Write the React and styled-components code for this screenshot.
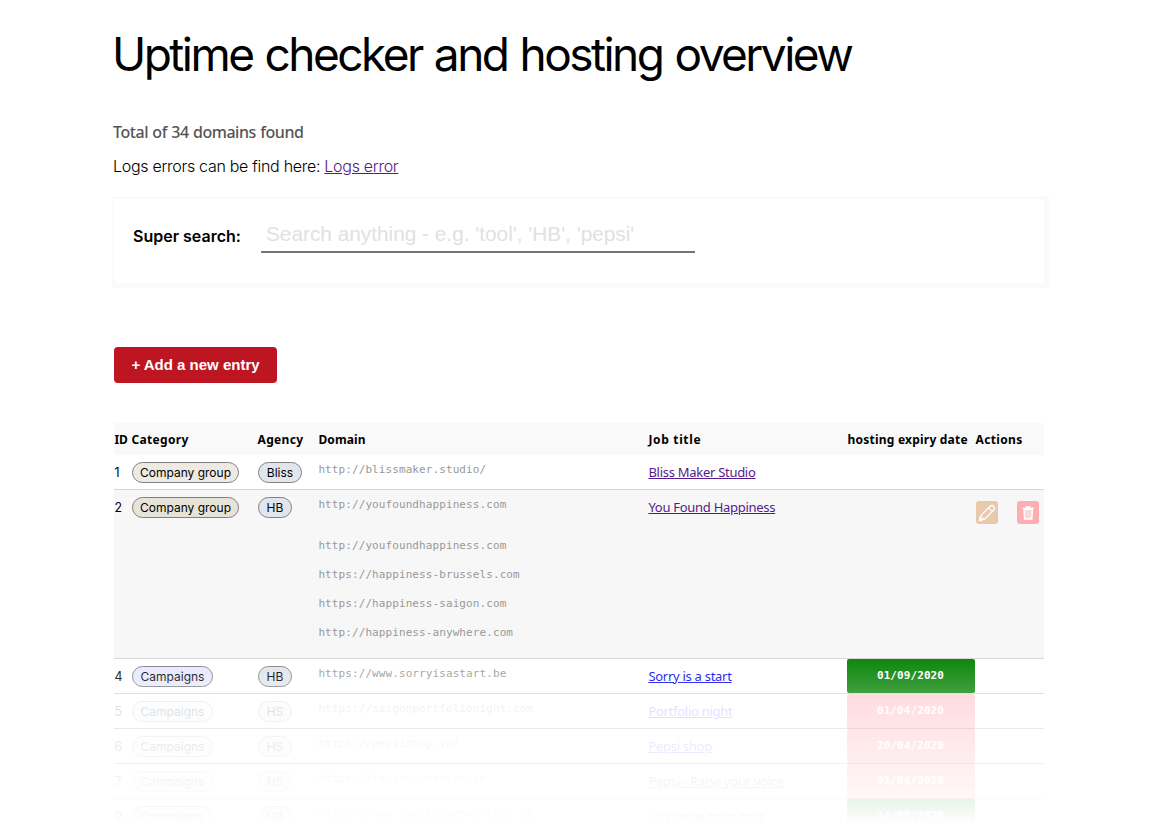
import React from "react";
import styled, { createGlobalStyle } from "styled-components";

const ui = `Inter, "Liberation Sans", sans-serif`;
const humanist = `"Noto Sans", "Open Sans", sans-serif`;
const mono = `"DejaVu Sans Mono", "Liberation Mono", monospace`;

const GlobalStyle = createGlobalStyle`
  * { box-sizing: border-box; }
  html, body { margin: 0; background: #fff; }
  body { font-family: ${ui}; color: #000; overflow: hidden; }
`;

const Page = styled.main`
  position: relative;
  height: 831px;
  width: 931px;
  margin-left: 113px;
  overflow: visible;
`;

const Title = styled.h1`
  margin: 0 0 0 -1px;
  padding-top: 26px;
  font-size: 46px;
  line-height: 56px;
  font-weight: 380;
  letter-spacing: -2.55px;
  word-spacing: 1.8px;
  white-space: nowrap;
`;

const Total = styled.p`
  margin: 38px 0 0;
  font-family: ${humanist};
  font-size: 16px;
  line-height: 24px;
  font-weight: 500;
  letter-spacing: -0.45px;
  word-spacing: 0.6px;
  color: #555;
`;

const Logs = styled.p`
  margin: 11px 0 0;
  font-size: 16px;
  line-height: 22px;
  font-weight: 300;
  letter-spacing: -0.29px;
`;

const LogsLink = styled.a`
  color: #551a8b;
  text-decoration: underline;
`;

const SearchPanel = styled.section`
  display: flex;
  align-items: flex-start;
  width: 930px;
  height: 84px;
  margin: 22px 0 0 1px;
  padding: 20px 19px 0;
  background: #fff;
  box-shadow: 1.5px 1.5px 1px 3.5px #fafafa;
`;

const SearchLabel = styled.label`
  width: 128px;
  padding-top: 6px;
  font-size: 16px;
  line-height: 22px;
  font-weight: 600;
`;

const SearchInput = styled.input`
  width: 434px;
  height: 34px;
  padding: 0 5px 3px;
  border: 0;
  border-bottom: 2px solid #757575;
  outline: 0;
  background: transparent;
  font-family: "Liberation Sans", Arial, sans-serif;
  font-size: 20.8px;
  &::placeholder { color: #e1e1e1; opacity: 1; }
`;

const AddButton = styled.button`
  display: block;
  width: 163px;
  height: 36px;
  margin: 64px 0 0 1px;
  padding: 0 0 2px;
  border: 0;
  border-radius: 4px;
  background: #bd1622;
  color: #fff;
  font-family: "Liberation Sans", Arial, sans-serif;
  font-size: 15px;
  font-weight: 700;
`;

const Table = styled.div`
  width: 930px;
  margin: 40px 0 0 1px;
`;

const Row = styled.div`
  display: grid;
  grid-template-columns: 17px 126px 61px 330px 199px 128px 69px;
  height: ${(p) => p.$height || 35}px;
  border-bottom: 1px solid #d6d6d6;
  background: ${(p) => (p.$shaded ? "#f7f7f7" : "transparent")};
`;

const HeadRow = styled(Row)`
  height: 32px;
  border: 0;
  background: #f9f9f9;
`;

const HeadCell = styled.div`
  padding-left: 0.5px;
  font-family: ${humanist};
  font-size: 12px;
  line-height: 33px;
  font-weight: 700;
  letter-spacing: ${(p) => p.$spacing}px;
  white-space: nowrap;
`;

const Cell = styled.div`
  padding: 7px 0 0 ${(p) => (p.$flush ? 0.4 : 1)}px;
  font-size: 12.4px;
  line-height: 21px;
  white-space: nowrap;
  opacity: ${(p) => p.$opacity};
`;

const Pill = styled.span`
  display: block;
  width: ${(p) => p.$width}px;
  height: 21px;
  border: 1px solid #808080;
  border-radius: 11px;
  background: ${(p) => p.$tone};
  font-size: 12px;
  line-height: 20px;
  text-align: center;
`;

const Url = styled.div`
  font-family: ${mono};
  font-size: 11px;
  line-height: 15px;
  letter-spacing: 0.09px;
  color: #999;
`;

const UrlList = styled.div`
  display: grid;
  gap: 14px;
  padding-top: 26px;
`;

const JobLink = styled.a`
  font-family: ${humanist};
  font-size: 13px;
  letter-spacing: -0.28px;
  color: ${(p) => (p.$visited ? "#551a8b" : "#0000ee")};
  text-decoration: underline;
`;

const DateBadge = styled.div`
  height: ${(p) => (p.$expired ? 35 : 34)}px;
  padding-right: 1px;
  border-radius: 2px;
  background: ${(p) => (p.$expired ? "#ff0015" : "#008000")};
  opacity: ${(p) => p.$opacity};
  color: #fff;
  font-family: ${mono};
  font-size: 11px;
  line-height: 33px;
  font-weight: 700;
  letter-spacing: 0.09px;
  text-align: center;
`;

const Actions = styled.div`
  display: flex;
  gap: 19px;
  padding: 11px 0 0 1px;
`;

const IconButton = styled.button`
  width: 22px;
  height: 23px;
  padding: 0;
  border: 0;
  border-radius: 3px;
  background: ${(p) => p.$tone};
  svg { display: block; }
`;

const Fade = styled.div`
  position: absolute;
  left: -20px;
  right: -20px;
  bottom: 0;
  height: 182px;
  background: linear-gradient(rgba(255, 255, 255, 0), #fff 176px);
  pointer-events: none;
`;

const PencilIcon = () => (
  <svg width="22" height="23" viewBox="0 0 22 23" fill="none" stroke="#fff" strokeWidth="1.3" strokeLinejoin="round">
    <path d="M3.6 19.4 4.8 14.6 14 5.2q1.7-1.5 3.6.2 1.7 1.9.2 3.6L8.4 18.2Z" />
    <path d="m12.4 6.8 3.8 3.8" />
    <path d="m4.9 14.7 3.4 3.4" strokeWidth="1" />
    <path d="m3.4 19.6.8-2.8 2 2Z" fill="#fff" />
  </svg>
);

const TrashIcon = () => (
  <svg width="22" height="23" viewBox="0 0 22 23" fill="none">
    <path d="M7 8.2h8.4l-.5 9.8H7.5Z" fill="#fff" fillOpacity=".5" stroke="#fff" strokeWidth="1.5" strokeLinejoin="round" />
    <path d="M5.6 7.4h11.2" stroke="#fff" strokeWidth="1.5" />
    <path d="M9 5.1h4.4v2H9Z" fill="#fff" />
  </svg>
);

const columns = [
  ["ID", -0.2], ["Category", 0.32], ["Agency", 0.35], ["Domain", 0.08],
  ["Job title", 0.65], ["hosting expiry date", 0.22], ["Actions", 0.34],
];

const rows = [
  { id: 1, category: "Company group", catTone: "#eee9e1", agency: "Bliss", agTone: "#e1e6ee", url: "http://blissmaker.studio/", job: "Bliss Maker Studio", visited: true },
  {
    id: 2, category: "Company group", catTone: "#e6e3d9", agency: "HB", agTone: "#e1e6ee", url: "http://youfoundhappiness.com", job: "You Found Happiness", visited: true,
    height: 169, shaded: true, actions: true,
    more: ["http://youfoundhappiness.com", "https://happiness-brussels.com", "https://happiness-saigon.com", "http://happiness-anywhere.com"],
  },
  { id: 4, category: "Campaigns", catTone: "#e6e8fd", agency: "HB", agTone: "#e1e5ea", url: "https://www.sorryisastart.be", job: "Sorry is a start", date: "01/09/2020" },
  { id: 5, category: "Campaigns", catTone: "#e6effd", agency: "HS", agTone: "#e6e8ea", url: "https://saigonportfolionight.com", job: "Portfolio night", date: "01/04/2020", expired: true, opacity: 0.18 },
  { id: 6, category: "Campaigns", catTone: "#e6effd", agency: "HS", agTone: "#e6e8ea", url: "https://pepsishop.vn/", job: "Pepsi shop", date: "20/04/2020", expired: true, opacity: 0.18 },
  { id: 7, category: "Campaigns", catTone: "#e6effd", agency: "HS", agTone: "#e6e8ea", url: "https://raiseyourvoice.vn", job: "Pepsi - Raise your voice", date: "01/04/2020", expired: true, opacity: 0.18 },
  { id: 9, category: "Campaigns", catTone: "#e6effd", agency: "HB", agTone: "#e1e6ea", url: "https://www.lavitessepourtous.be", job: "La vitesse pour tous", date: "14/08/2020", opacity: 0.6 },
];

const pillWidths = { "Company group": 107, Campaigns: 81, Bliss: 44, HB: 34, HS: 34 };

function DomainRow({ row }) {
  const o = row.opacity || 1;
  return (
    <Row $height={row.height} $shaded={row.shaded}>
      <Cell $flush $opacity={o}>{row.id}</Cell>
      <Cell $opacity={o}><Pill $width={pillWidths[row.category]} $tone={row.catTone}>{row.category}</Pill></Cell>
      <Cell $opacity={o}><Pill $width={pillWidths[row.agency]} $tone={row.agTone}>{row.agency}</Pill></Cell>
      <Cell $flush $opacity={o}>
        <Url>{row.url}</Url>
        {row.more && <UrlList>{row.more.map((u) => <Url key={u}>{u}</Url>)}</UrlList>}
      </Cell>
      <Cell $flush $opacity={o}><JobLink $visited={row.visited}>{row.job}</JobLink></Cell>
      {row.date ? <DateBadge $expired={row.expired} $opacity={o}>{row.date}</DateBadge> : <div />}
      {row.actions && (
        <Actions>
          <IconButton $tone="#e8c9ab" aria-label="Edit"><PencilIcon /></IconButton>
          <IconButton $tone="#ffadb1" aria-label="Delete"><TrashIcon /></IconButton>
        </Actions>
      )}
    </Row>
  );
}

export default function App() {
  return (
    <>
      <GlobalStyle />
      <Page>
        <Title>Uptime checker and hosting overview</Title>
        <Total>Total of 34 domains found</Total>
        <Logs>Logs errors can be find here: <LogsLink>Logs error</LogsLink></Logs>
        <SearchPanel>
          <SearchLabel htmlFor="search">Super search:</SearchLabel>
          <SearchInput id="search" placeholder="Search anything - e.g. 'tool', 'HB', 'pepsi'" />
        </SearchPanel>
        <AddButton>+ Add a new entry</AddButton>
        <Table>
          <HeadRow>
            {columns.map(([name, spacing]) => <HeadCell key={name} $spacing={spacing}>{name}</HeadCell>)}
          </HeadRow>
          {rows.map((row) => <DomainRow key={row.id} row={row} />)}
        </Table>
        <Fade />
      </Page>
    </>
  );
}
